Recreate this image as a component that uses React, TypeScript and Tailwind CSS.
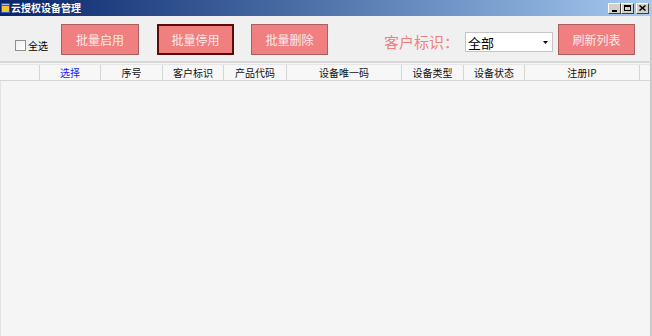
import React from "react";

const font = { fontFamily: '"Noto Sans CJK SC", "Noto Sans", sans-serif' };

const cols: { w: number; label: string; blue?: boolean }[] = [
  { w: 40, label: "" },
  { w: 61, label: "选择", blue: true },
  { w: 62, label: "序号" },
  { w: 61, label: "客户标识" },
  { w: 63, label: "产品代码" },
  { w: 115, label: "设备唯一码" },
  { w: 62, label: "设备类型" },
  { w: 61, label: "设备状态" },
  { w: 115, label: "注册IP" },
];

function WinBtn({ children }: { children: React.ReactNode }) {
  return (
    <div className="w-[13px] h-[11px] bg-[#d4d0c8] border-t border-l border-t-white border-l-white border-b border-r border-b-[#404040] border-r-[#404040] flex items-center justify-center">
      {children}
    </div>
  );
}

function PinkButton({ label, focused, className }: { label: string; focused?: boolean; className?: string }) {
  return (
    <div
      className={
        "h-[31px] bg-[#f08080] flex items-center justify-center text-[12px] text-[#fde9e9] " +
        (focused ? "border-2 border-[#5c0b0b] " : "border border-[#a86060] ") +
        (className ?? "")
      }
      style={font}
    >
      {label}
    </div>
  );
}

export default function App() {
  return (
    <div className="w-[652px] h-[336px] bg-[#f0f0f0] flex flex-col overflow-hidden" style={font}>
      {/* title bar */}
      <div className="h-[16px] shrink-0 flex items-center bg-gradient-to-r from-[#0a246a] to-[#a6caf0]">
        <svg width="9" height="10" viewBox="0 0 9 10" className="ml-[1px]">
          <rect x="0" y="0" width="9" height="10" fill="#2a5bd6" />
          <rect x="1" y="3" width="7" height="6" fill="#f4c430" />
          <rect x="1" y="1" width="7" height="1" fill="#9cc3ff" />
        </svg>
        <span className="ml-[1px] text-[10px] font-bold text-white leading-none">云授权设备管理</span>
        <div className="ml-auto mr-[3px] flex items-center">
          <WinBtn>
            <div className="w-[5px] h-[2px] bg-black mt-[5px] -ml-[1px]" />
          </WinBtn>
          <WinBtn>
            <div className="w-[7px] h-[6px] border border-black border-t-2" />
          </WinBtn>
          <div className="ml-[2px]">
            <WinBtn>
              <svg width="7" height="6" viewBox="0 0 7 6">
                <path d="M0.5 0.5 L6.5 5.5 M6.5 0.5 L0.5 5.5" stroke="#000" strokeWidth="1.5" />
              </svg>
            </WinBtn>
          </div>
        </div>
      </div>

      {/* toolbar */}
      <div className="h-[45px] shrink-0 flex items-start border-r-2 border-r-[#c8c8c8]">
        <div className="mt-[24px] ml-[15px] w-[46px] shrink-0 flex items-center">
          <div className="w-[11px] h-[11px] border border-[#8e8f8f] bg-gradient-to-br from-[#f0f0f0] to-white" />
          <span className="ml-[2px] text-[10px] text-black leading-none">全选</span>
        </div>
        <PinkButton label="批量启用" className="mt-[8px] w-[78px]" />
        <PinkButton label="批量停用" focused className="mt-[8px] ml-[18px] w-[77px]" />
        <PinkButton label="批量删除" className="mt-[8px] ml-[17px] w-[77px]" />
        <span className="mt-[18px] ml-[56px] text-[15px] leading-none text-[#f08080]">客户标识：</span>
        <div className="mt-[16px] ml-[6px] w-[88px] h-[20px] bg-white border border-[#c5c5c5] flex items-center">
          <span className="ml-[2px] text-[13px] leading-none text-black">全部</span>
          <svg width="5" height="3" viewBox="0 0 5 3" className="ml-auto mr-[4px]">
            <path d="M0 0 H5 L2.5 3 Z" fill="#000" />
          </svg>
        </div>
        <PinkButton label="刷新列表" className="mt-[8px] ml-[5px] w-[77px]" />
      </div>

      {/* grid */}
      <div className="flex-1 flex flex-col border-t-2 border-t-[#d8d8d8] border-r-2 border-r-[#c8c8c8] bg-[#f5f5f5]">
        <div className="mt-[1px] h-[17px] shrink-0 flex bg-[#f7f7f7] border-t border-t-[#e6e6e6] border-b border-b-[#d5d5d5]">
          {cols.map((c, i) => (
            <div
              key={i}
              className="shrink-0 h-full border-r border-r-[#d5d5d5] flex items-center justify-center text-[10px] leading-none"
              style={{ width: c.w }}
            >
              <span className={c.blue ? "text-[#1a1aff]" : "text-[#111]"}>{c.label}</span>
            </div>
          ))}
          <div className="flex-1" />
        </div>
        <div className="flex-1 border-l border-l-[#e2e2e2]" />
      </div>
    </div>
  );
}
